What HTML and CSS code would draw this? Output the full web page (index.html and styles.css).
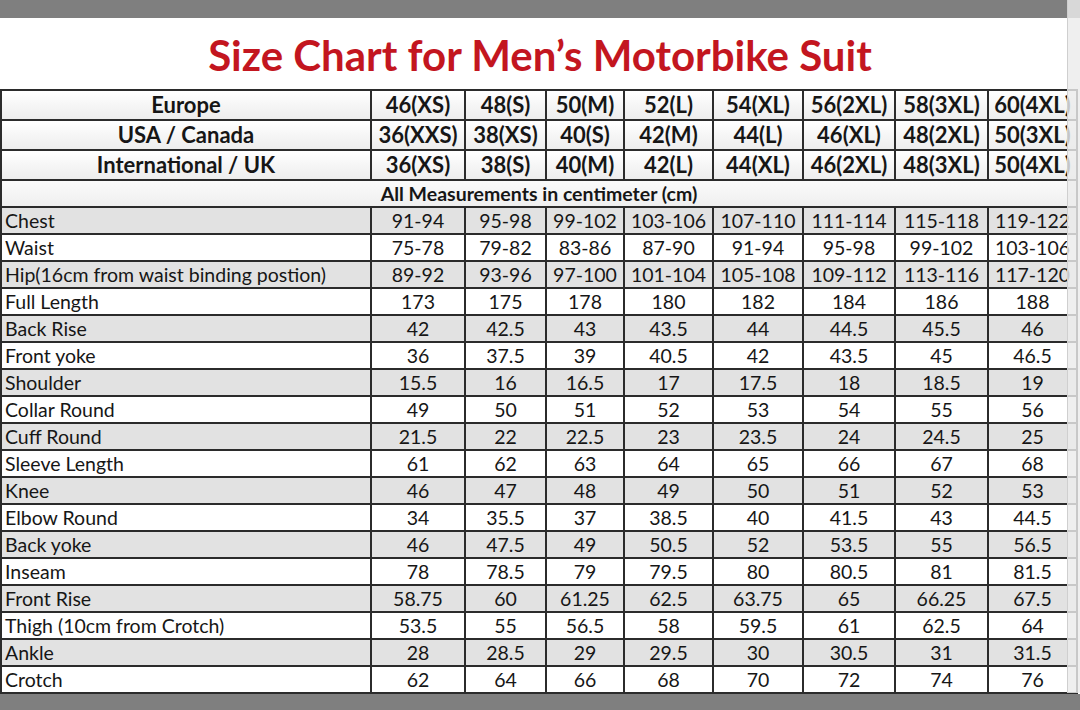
FILE: index.html
```html
<!DOCTYPE html>
<html lang="en">
<head>
<meta charset="utf-8">
<title>Size Chart for Men’s Motorbike Suit</title>
<link rel="stylesheet" href="styles.css">
</head>
<body>
<div class="page">
  <div class="topbar"></div>
  <h1 class="title">Size Chart for Men’s Motorbike Suit</h1>
  <table class="chart">
    <colgroup>
      <col class="c-label"><col class="c1"><col class="c2"><col class="c3"><col class="c4"><col class="c5"><col class="c6"><col class="c7"><col class="c8">
    </colgroup>
    <tbody>
      <tr class="head"><td>Europe</td><td>46(XS)</td><td>48(S)</td><td>50(M)</td><td>52(L)</td><td>54(XL)</td><td>56(2XL)</td><td>58(3XL)</td><td>60(4XL)</td></tr>
      <tr class="head"><td>USA / Canada</td><td>36(XXS)</td><td>38(XS)</td><td>40(S)</td><td>42(M)</td><td>44(L)</td><td>46(XL)</td><td>48(2XL)</td><td>50(3XL)</td></tr>
      <tr class="head"><td>International / UK</td><td>36(XS)</td><td>38(S)</td><td>40(M)</td><td>42(L)</td><td>44(XL)</td><td>46(2XL)</td><td>48(3XL)</td><td>50(4XL)</td></tr>
      <tr class="unit"><td colspan="9">All Measurements in centimeter (cm)</td></tr>
      <tr class="row alt"><td>Chest</td><td>91-94</td><td>95-98</td><td>99-102</td><td>103-106</td><td>107-110</td><td>111-114</td><td>115-118</td><td>119-122</td></tr>
      <tr class="row"><td>Waist</td><td>75-78</td><td>79-82</td><td>83-86</td><td>87-90</td><td>91-94</td><td>95-98</td><td>99-102</td><td>103-106</td></tr>
      <tr class="row alt"><td>Hip(16cm from waist binding postion)</td><td>89-92</td><td>93-96</td><td>97-100</td><td>101-104</td><td>105-108</td><td>109-112</td><td>113-116</td><td>117-120</td></tr>
      <tr class="row"><td>Full Length</td><td>173</td><td>175</td><td>178</td><td>180</td><td>182</td><td>184</td><td>186</td><td>188</td></tr>
      <tr class="row alt"><td>Back Rise</td><td>42</td><td>42.5</td><td>43</td><td>43.5</td><td>44</td><td>44.5</td><td>45.5</td><td>46</td></tr>
      <tr class="row"><td>Front yoke</td><td>36</td><td>37.5</td><td>39</td><td>40.5</td><td>42</td><td>43.5</td><td>45</td><td>46.5</td></tr>
      <tr class="row alt"><td>Shoulder</td><td>15.5</td><td>16</td><td>16.5</td><td>17</td><td>17.5</td><td>18</td><td>18.5</td><td>19</td></tr>
      <tr class="row"><td>Collar Round</td><td>49</td><td>50</td><td>51</td><td>52</td><td>53</td><td>54</td><td>55</td><td>56</td></tr>
      <tr class="row alt"><td>Cuff Round</td><td>21.5</td><td>22</td><td>22.5</td><td>23</td><td>23.5</td><td>24</td><td>24.5</td><td>25</td></tr>
      <tr class="row"><td>Sleeve Length</td><td>61</td><td>62</td><td>63</td><td>64</td><td>65</td><td>66</td><td>67</td><td>68</td></tr>
      <tr class="row alt"><td>Knee</td><td>46</td><td>47</td><td>48</td><td>49</td><td>50</td><td>51</td><td>52</td><td>53</td></tr>
      <tr class="row"><td>Elbow Round</td><td>34</td><td>35.5</td><td>37</td><td>38.5</td><td>40</td><td>41.5</td><td>43</td><td>44.5</td></tr>
      <tr class="row alt"><td>Back yoke</td><td>46</td><td>47.5</td><td>49</td><td>50.5</td><td>52</td><td>53.5</td><td>55</td><td>56.5</td></tr>
      <tr class="row"><td>Inseam</td><td>78</td><td>78.5</td><td>79</td><td>79.5</td><td>80</td><td>80.5</td><td>81</td><td>81.5</td></tr>
      <tr class="row alt"><td>Front Rise</td><td>58.75</td><td>60</td><td>61.25</td><td>62.5</td><td>63.75</td><td>65</td><td>66.25</td><td>67.5</td></tr>
      <tr class="row"><td>Thigh (10cm from Crotch)</td><td>53.5</td><td>55</td><td>56.5</td><td>58</td><td>59.5</td><td>61</td><td>62.5</td><td>64</td></tr>
      <tr class="row alt"><td>Ankle</td><td>28</td><td>28.5</td><td>29</td><td>29.5</td><td>30</td><td>30.5</td><td>31</td><td>31.5</td></tr>
      <tr class="row"><td>Crotch</td><td>62</td><td>64</td><td>66</td><td>68</td><td>70</td><td>72</td><td>74</td><td>76</td></tr>
    </tbody>
  </table>
  <div class="bottombar"></div>
  <div class="edge"></div>
</div>
</body>
</html>
```

FILE: styles.css
```css
* { box-sizing: border-box; }
html, body { margin: 0; padding: 0; }
body { background: #7f7f7f; }
.page {
  position: relative;
  width: 1080px;
  height: 710px;
  overflow: hidden;
  background: #ffffff;
  display: flex;
  flex-direction: column;
  font-family: "Lato", "Open Sans", sans-serif;
  color: #161616;
}
.topbar { height: 18px; background: #7f7f7f; flex: none; }
.title {
  margin: 0;
  height: 71px;
  display: flex;
  align-items: center;
  justify-content: center;
  padding-top: 2px;
  color: #c3161f;
  font-size: 42px;
  font-weight: 700;
  flex: none;
}
.chart {
  flex: none;
  width: 1076px;
  border-collapse: collapse;
  table-layout: fixed;
}
.c-label { width: 370px; }
.c1 { width: 94px; }
.c2 { width: 81px; }
.c3 { width: 78px; }
.c4 { width: 89px; }
.c5 { width: 90px; }
.c6 { width: 92px; }
.c7 { width: 93px; }
.c8 { width: 89px; }
.chart td {
  border: 2px solid #2b2b2b;
  padding: 0;
  text-align: center;
  white-space: nowrap;
  overflow: hidden;
}
.head td {
  height: 30px;
  font-weight: 700;
  font-size: 22px;
  line-height: 26px;
  background: linear-gradient(#ffffff, #ededed);
}
.unit td {
  height: 27px;
  font-weight: 700;
  font-size: 19.5px;
  line-height: 23px;
  background: linear-gradient(#fbfbfb, #efefef);
}
.row td {
  height: 27px;
  font-size: 19.5px;
  line-height: 23px;
  background: #ffffff;
}
.row.alt td { background: #e2e2e2; }
.row td:first-child { text-align: left; padding-left: 3px; }
.bottombar { flex: 1; background: #7f7f7f; }
.edge {
  position: absolute;
  top: 0;
  right: 0;
  width: 13px;
  height: 693px;
  background: rgba(236, 236, 236, 0.82);
  border-left: 1px solid #cfcfcf;
}
```
